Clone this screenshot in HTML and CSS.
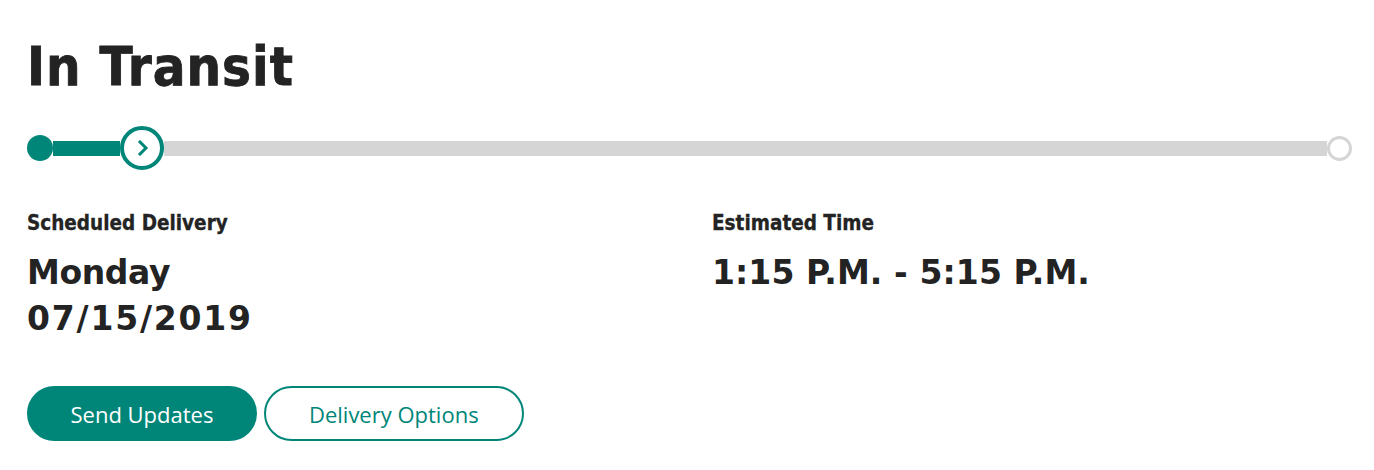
FILE: index.html
```html
<!DOCTYPE html>
<html lang="en">
<head>
<meta charset="utf-8">
<title>In Transit</title>
<link rel="stylesheet" href="styles.css">
</head>
<body>
<main class="tracker">
  <h1 class="status">In Transit</h1>
  <div class="progress">
    <span class="dot-start"></span>
    <span class="seg-done"></span>
    <span class="dot-current">
      <svg width="16" height="16" viewBox="0 0 16 16" aria-hidden="true"><polyline points="5,2 11,8 5,14" fill="none" stroke="#008679" stroke-width="3" stroke-linecap="square"/></svg>
    </span>
    <span class="seg-todo"></span>
    <span class="dot-end"></span>
  </div>
  <div class="details">
    <section class="detail">
      <h2 class="label">Scheduled Delivery</h2>
      <p class="value"><span class="day">Monday</span><br><span class="date">07/15/2019</span></p>
    </section>
    <section class="detail">
      <h2 class="label">Estimated Time</h2>
      <p class="value">1:15 P.M. - 5:15 P.M.</p>
    </section>
  </div>
  <div class="actions">
    <button class="btn btn-primary" type="button">Send Updates</button>
    <button class="btn btn-outline" type="button">Delivery Options</button>
  </div>
</main>
</body>
</html>
```

FILE: styles.css
```css
html, body {
  margin: 0;
  padding: 0;
  background: #ffffff;
}

.tracker {
  padding: 34px 22px 0 27px;
  color: #232323;
  font-family: "DejaVu Sans", Verdana, sans-serif;
}

.status {
  margin: 0;
  font-size: 54px;
  line-height: 65px;
  font-weight: 700;
  font-stretch: condensed;
  letter-spacing: 1px;
  -webkit-text-stroke: 0.8px #232323;
}

.progress {
  margin-top: 27px;
  height: 44px;
  display: flex;
  align-items: center;
}

.dot-start {
  flex: none;
  width: 26px;
  height: 26px;
  border-radius: 50%;
  background: #008679;
}

.seg-done {
  flex: none;
  width: 67px;
  height: 15px;
  background: #008679;
}

.dot-current {
  flex: none;
  box-sizing: border-box;
  width: 44px;
  height: 44px;
  border-radius: 50%;
  border: 4px solid #008679;
  background: #ffffff;
  display: flex;
  align-items: center;
  justify-content: center;
  padding-left: 2px;
}

.dot-current svg {
  display: block;
}

.seg-todo {
  flex: 1;
  height: 15px;
  background: #d5d5d5;
}

.dot-end {
  flex: none;
  box-sizing: border-box;
  width: 25px;
  height: 25px;
  border-radius: 50%;
  border: 3px solid #d5d5d5;
  background: #ffffff;
}

.details {
  margin-top: 41px;
  display: grid;
  grid-template-columns: 1fr 1fr;
  column-gap: 45px;
}

.label {
  margin: 0;
  font-size: 20.5px;
  line-height: 24px;
  font-weight: 700;
  font-stretch: condensed;
  -webkit-text-stroke: 0.3px #232323;
}

.value {
  margin: 15px 0 0;
  font-size: 33px;
  line-height: 46px;
  font-weight: 700;
  letter-spacing: 0.1px;
}

.day {
  letter-spacing: -0.4px;
}

.date {
  letter-spacing: 1.8px;
}

.actions {
  margin-top: 44px;
  display: flex;
  gap: 7px;
}

.btn {
  box-sizing: border-box;
  height: 55px;
  padding: 0 41.5px;
  border-radius: 28px;
  border: 2px solid #008679;
  font-family: "Open Sans", "Noto Sans", sans-serif;
  font-size: 22px;
  line-height: 1;
  cursor: pointer;
}

.btn-primary {
  background: #008679;
  color: #ffffff;
}

.btn-outline {
  background: #ffffff;
  color: #008679;
  padding: 0 43px;
}
```
